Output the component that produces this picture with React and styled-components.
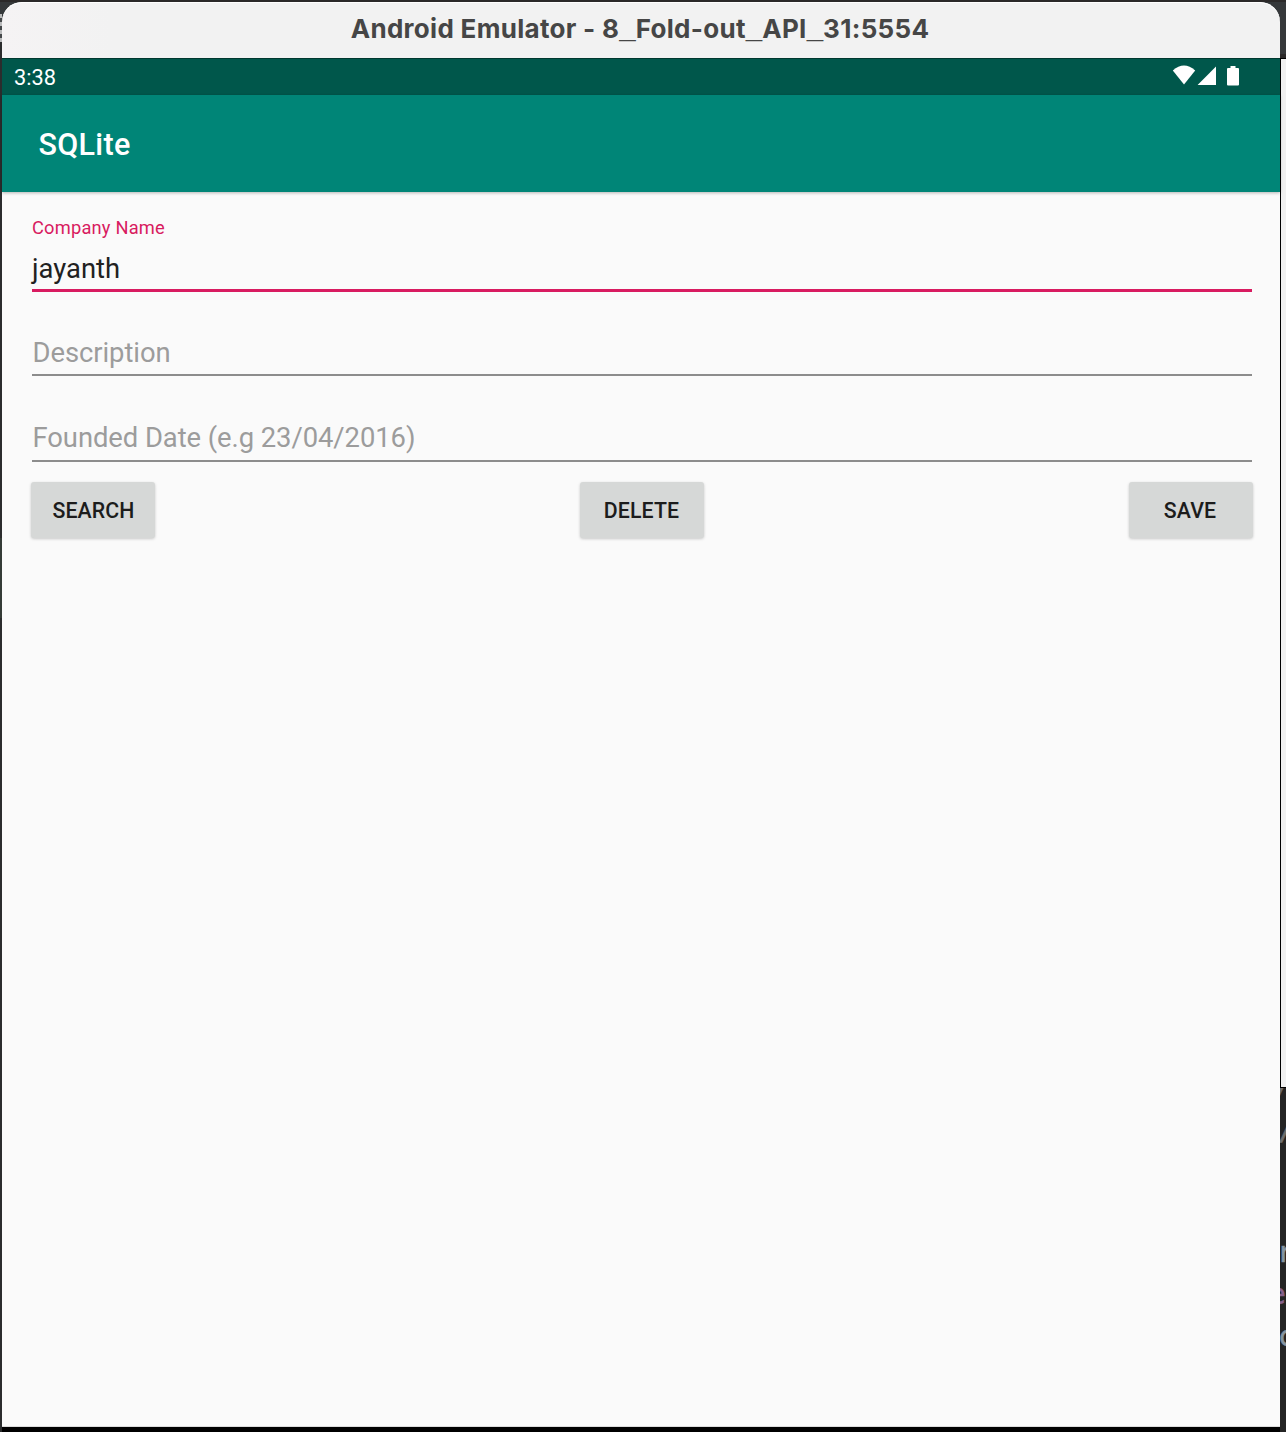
import React from "react";
import styled, { createGlobalStyle } from "styled-components";

const GlobalStyle = createGlobalStyle`
  *, *::before, *::after { box-sizing: border-box; }
  body { margin: 0; background: #2b2929; font-family: Roboto, sans-serif; }
`;

const Desktop = styled.div`
  display: grid;
  grid-template-columns: 2px 1278px 6px;
  height: 1432px;
  overflow: hidden;
  background: linear-gradient(#2b2929 0 2px, #35383a 2px 54px, #2b2929 54px);
`;

const Edge = styled.div`
  display: flex;
  flex-direction: column;
  min-width: 0;
  overflow: hidden;
`;

const EdgeBlock = styled.div`
  flex: none;
  height: ${(p) => p.$h}px;
  background: ${(p) => p.$bg};
`;

const MenuStripes = styled(EdgeBlock)`
  background: repeating-linear-gradient(#b9babb 0 4px, #45484a 4px 8px);
`;

const EditorPane = styled.div`
  flex: none;
  height: 1030px;
  background: #f0f0f0;
  border: solid #000;
  border-width: 1px 0 1px 1px;
`;

const CodePane = styled.div`
  flex: 1;
  overflow: hidden;
  background: #242424;
`;

const CodeLine = styled.div`
  height: ${(p) => p.$h}px;
  margin-left: ${(p) => p.$shift}px;
  font: 28px/${(p) => p.$h}px "DejaVu Sans Mono", monospace;
  -webkit-text-stroke: 0.6px ${(p) => p.$color};
  color: ${(p) => p.$color};
`;

const EmulatorWindow = styled.div`
  display: flex;
  flex-direction: column;
  padding-top: 2px;
`;

const TitleBar = styled.header`
  height: 56px;
  padding-right: 2px;
  border-radius: 20px 20px 0 0;
  background: linear-gradient(90deg, #f5f3f4, #f2f2f2 110px);
  box-shadow: inset 0 1px 0 #fff;
  font: 700 26px/54px Inter, sans-serif;
  letter-spacing: 0.3px;
  text-align: center;
  color: #464646;
  white-space: nowrap;
`;

const Underscore = styled.span`
  font: 700 29.5px/1 "Liberation Sans", sans-serif;
  letter-spacing: 0;
`;

const StatusBar = styled.div`
  display: flex;
  align-items: center;
  justify-content: space-between;
  height: 37px;
  padding: 1px 40px 0 12px;
  border-top: 1px solid #00382f;
  background: #00574b;
  color: #fff;
  font-size: 21.8px;
`;

const StatusIcons = styled.svg`
  display: block;
  width: 68px;
  height: 22px;
  margin-bottom: 3px;
  fill: #fff;
`;

const AppBar = styled.div`
  position: relative;
  display: flex;
  align-items: center;
  height: 97px;
  padding: 2px 36.5px 0;
  background: #008577;
  color: #fff;
  font-size: 30.5px;
  font-weight: 500;
  letter-spacing: 0.3px;
  box-shadow: 0 1px 3px rgba(0, 0, 0, 0.28);
`;

const Screen = styled.main`
  flex: 1;
  padding: 24px 28px 0 30px;
  background: #fafafa;
  border-bottom: 1px solid #dcdcdc;
`;

const Field = styled.label`
  display: flex;
  flex-direction: column;
  height: ${(p) => p.$h}px;
  border-bottom: ${(p) => (p.$active ? "3px solid #d81b60" : "2px solid #8c8c8c")};
  margin-bottom: ${(p) => p.$gap}px;
`;

const FieldLabel = styled.span`
  font-size: 18.3px;
  line-height: 24px;
  letter-spacing: 0.2px;
  color: #d81b60;
`;

const FieldText = styled.span`
  margin-top: auto;
  padding: 0 0 ${(p) => p.$bottom}px ${(p) => (p.$hint ? 0.5 : 0)}px;
  font-size: 27.4px;
  line-height: 34px;
  letter-spacing: ${(p) => (p.$hint ? -0.06 : 0)}px;
  color: ${(p) => (p.$hint ? "#9c9c9c" : "#212121")};
`;

const Actions = styled.div`
  display: flex;
  justify-content: space-between;
  margin: 0 -1px;
`;

const ActionButton = styled.button`
  width: 124px;
  height: 56px;
  padding: 1px 0 0;
  border: 0;
  border-radius: 3px;
  background: #d6d8d7;
  box-shadow: 0 1px 3px rgba(0, 0, 0, 0.2);
  color: #1c1c1c;
  font: 500 21.3px/1 Roboto, sans-serif;
  letter-spacing: 0.1px;
  text-indent: ${(p) => p.$nudge || 0}px;
`;

const NavigationBar = styled.div`
  height: 5px;
  background: #000;
`;

export default function App() {
  return (
    <>
      <GlobalStyle />
      <Desktop>
        <Edge>
          <EdgeBlock $h={14} $bg="transparent" />
          <MenuStripes $h={28} />
          <EdgeBlock $h={496} $bg="#2b2c2d" />
          <EdgeBlock $h={80} $bg="#343b36" />
          <EdgeBlock $h={814} $bg="#2b2c2d" />
        </Edge>
        <EmulatorWindow>
          <TitleBar>
            Android Emulator - 8<Underscore>_</Underscore>Fold-out<Underscore>_</Underscore>API
            <Underscore>_</Underscore>31:5554
          </TitleBar>
          <StatusBar>
            <span>3:38</span>
            <StatusIcons viewBox="0 0 68 22">
              <path d="M.8 5.5Q12-4.7 23.2 5.5L12 19.6Z" />
              <path d="M25.6 20H44V1.5Z" />
              <path d="M58.5 1h5v2h2.5q1 0 1 1v15.5q0 1-1 1h-10q-1 0-1-1V4q0-1 1-1h2.5Z" />
            </StatusIcons>
          </StatusBar>
          <AppBar>SQLite</AppBar>
          <Screen>
            <Field $active $h={76} $gap={42}>
              <FieldLabel>Company Name</FieldLabel>
              <FieldText $bottom={3}>jayanth</FieldText>
            </Field>
            <Field $h={42} $gap={43}>
              <FieldText $hint $bottom={4}>Description</FieldText>
            </Field>
            <Field $h={43} $gap={20}>
              <FieldText $hint $bottom={5}>Founded Date (e.g 23/04/2016)</FieldText>
            </Field>
            <Actions>
              <ActionButton $nudge={1}>SEARCH</ActionButton>
              <ActionButton $nudge={-1}>DELETE</ActionButton>
              <ActionButton $nudge={-2}>SAVE</ActionButton>
            </Actions>
          </Screen>
          <NavigationBar />
        </EmulatorWindow>
        <Edge>
          <EdgeBlock $h={58} $bg="transparent" />
          <EditorPane />
          <CodePane>
            <CodeLine $h={12} $shift={-9} $color="#6e6e6e">/</CodeLine>
            <CodeLine $h={62} $shift={-2} $color="#6e6e6e">/</CodeLine>
            <CodeLine $h={70} $shift={-2} $color="transparent" />
            <CodeLine $h={42} $shift={-3} $color="#8694a0">r</CodeLine>
            <CodeLine $h={42} $shift={-11} $color="#85608a">e</CodeLine>
            <CodeLine $h={42} $shift={-2} $color="#8694a0">c</CodeLine>
          </CodePane>
        </Edge>
      </Desktop>
    </>
  );
}
